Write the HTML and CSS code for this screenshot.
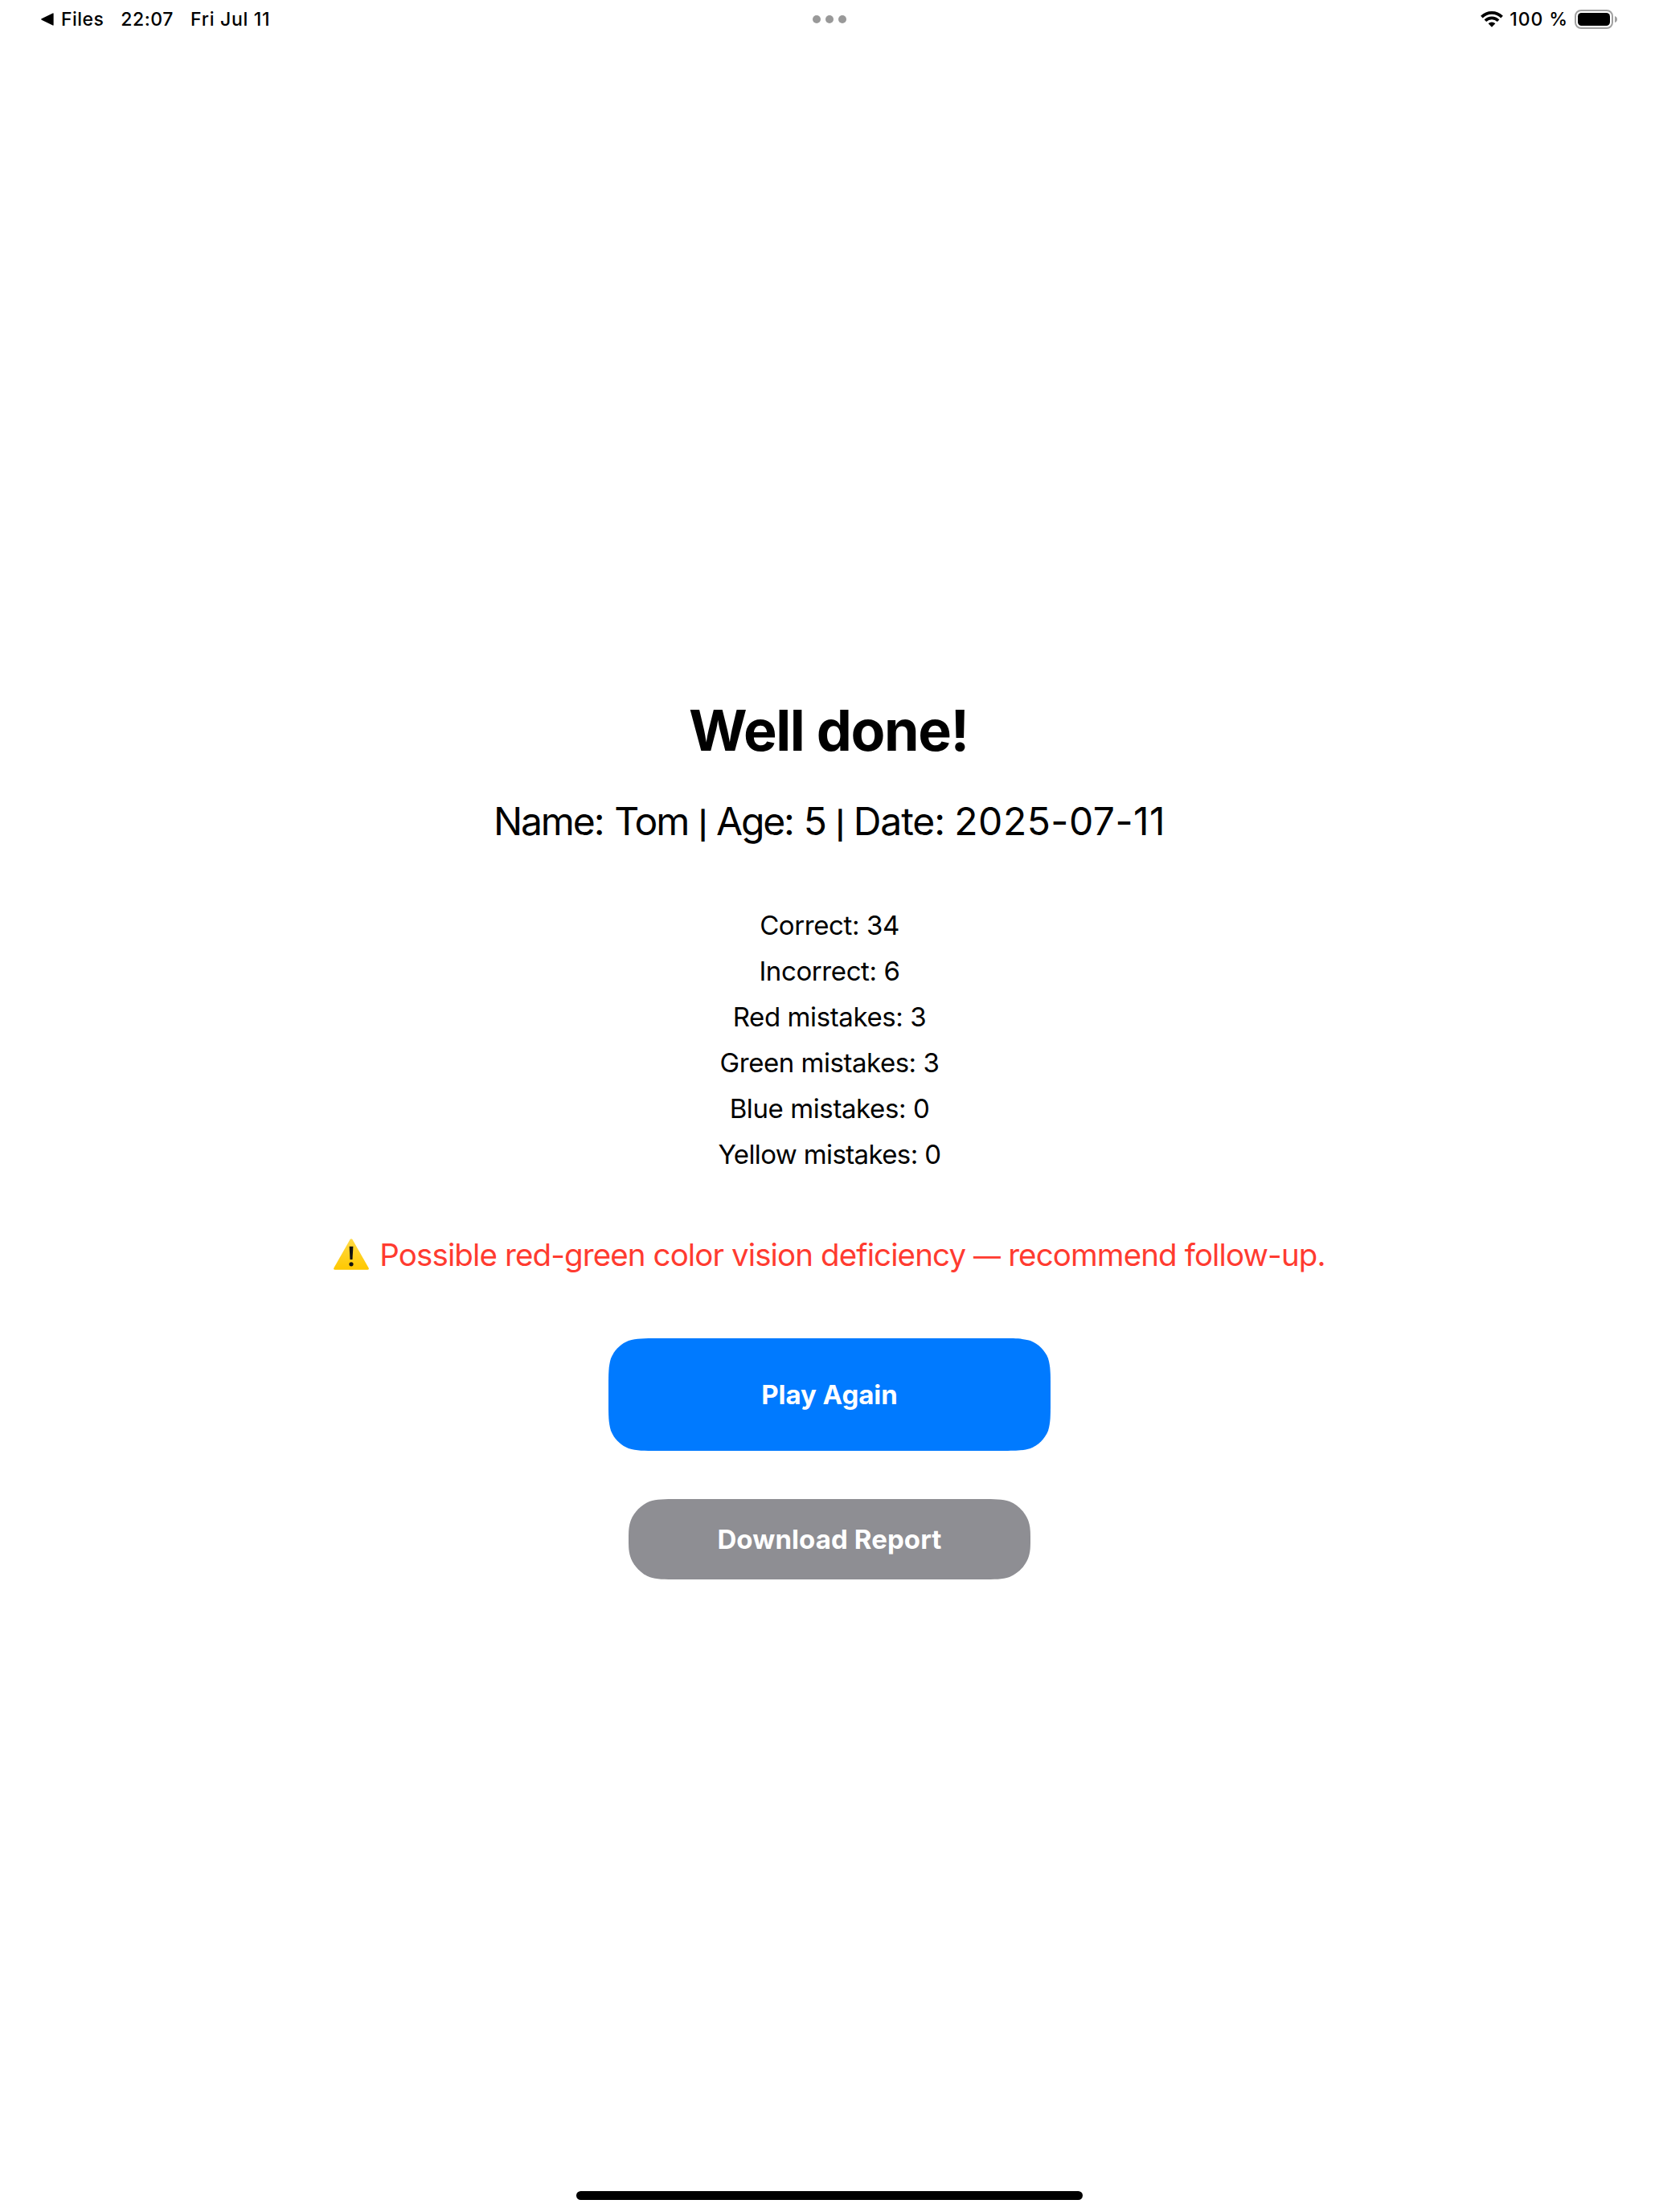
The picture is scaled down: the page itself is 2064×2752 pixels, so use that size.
FILE: index.html
```html
<!DOCTYPE html>
<html lang="en">
<head>
<meta charset="utf-8">
<title>Well done!</title>
<link rel="stylesheet" href="styles.css">
</head>
<body>
<header class="status-bar">
  <div class="status-left">
    <svg class="back-arrow" width="16" height="16" viewBox="0 0 16 16"><path d="M.7 7.3 14.6.4Q15.6 0 15.6 1v14q0 1-1 .6L.7 8.7Q-.3 8 .7 7.3Z"/></svg>
    <span class="back-app">Files</span>
    <span class="clock">22:07</span>
    <span class="date">Fri Jul 11</span>
  </div>
  <div class="multitask"><i></i><i></i><i></i></div>
  <div class="status-right">
    <svg class="wifi" width="28" height="20" viewBox="0 0 28 20"><g fill="none" stroke="#000" stroke-width="3.7"><path d="M1.4 7.1A17.8 17.8 0 0 1 26.6 7.1"/><path d="M5.9 11.7A11.5 11.5 0 0 1 22.1 11.7"/></g><path d="M9.6 15.3a6.2 6.2 0 0 1 8.8 0L14 19.8Z"/></svg>
    <span class="percent">100 %</span>
    <svg class="battery" width="54" height="24" viewBox="0 0 54 24"><rect x="1" y="1" width="46" height="22" rx="7" fill="none" stroke="#a0a0a0" stroke-width="2"/><rect x="4" y="4" width="40" height="16" rx="4.5"/><path d="M50 8q3 1 3 4t-3 4Z" fill="#a0a0a0"/></svg>
  </div>
</header>
<main class="results">
  <h1 class="title">Well done!</h1>
  <p class="player"><span class="name">Name: Tom</span> <span class="bar">|</span> <span class="age">Age: 5</span> <span class="bar">|</span> Date: <span class="day">2025-07-11</span></p>
  <ul class="scores">
    <li>Correct: 34</li>
    <li>Incorrect: 6</li>
    <li>Red mistakes: 3</li>
    <li class="tight">Green mistakes: 3</li>
    <li>Blue mistakes: 0</li>
    <li class="tighter">Yellow mistakes: 0</li>
  </ul>
  <div class="warning">
    <svg class="sign" width="44" height="39" viewBox="0 0 44 39"><defs><linearGradient id="sign" x1="0" y1="0" x2="0" y2="1"><stop offset="0" stop-color="#ffda45"/><stop offset="1" stop-color="#ffc800"/></linearGradient></defs><path d="M20.4 1.3Q22-.7 23.6 1.3L43.5 36.2Q44.6 38.7 42 38.7H2Q-.6 38.7.5 36.2Z" fill="url(#sign)"/><path d="M19.6 9.8h4.8L23.5 26h-3Z" fill="#111"/><circle cx="22" cy="31.8" r="2.6" fill="#111"/></svg>
    <p>Possible red-green color vision deficiency <span class="dash">—</span> recommend follow-up.</p>
  </div>
  <button class="button play">Play Again</button>
  <button class="button download">Download Report</button>
</main>
<footer class="home"><div class="home-indicator"></div></footer>
</body>
</html>
```
FILE: styles.css
```css
* {
  box-sizing: border-box;
  margin: 0;
  padding: 0;
}

body {
  display: flex;
  flex-direction: column;
  height: 2752px;
  background: #fff;
  color: #000;
  font-family: Inter, "Liberation Sans", sans-serif;
}

svg {
  display: block;
  flex: none;
}

.status-bar {
  display: grid;
  grid-template-columns: 1fr auto 1fr;
  align-items: center;
  height: 48px;
  padding: 0 51px;
  font-size: 23px;
  font-weight: 500;
  line-height: 48px;
  white-space: pre;
}

.status-left,
.status-right {
  display: flex;
  align-items: center;
}

.status-right {
  justify-content: flex-end;
}

.back-app {
  margin-left: 9px;
  letter-spacing: 0.46px;
}

.clock {
  margin-left: 21px;
  letter-spacing: 0.57px;
}

.date {
  margin-left: 21px;
  letter-spacing: 0.71px;
}

.multitask {
  display: flex;
  gap: 6px;
}

.multitask i {
  width: 10px;
  height: 10px;
  border-radius: 50%;
  background: #999;
}

.percent {
  margin-left: 8px;
  letter-spacing: 0.9px;
}

.battery {
  margin-left: 8px;
}

.results {
  display: flex;
  flex: 1;
  flex-direction: column;
  align-items: center;
  padding-top: 819px;
}

.title {
  padding-right: 2px;
  font-size: 70px;
  font-weight: 700;
  line-height: 84px;
  letter-spacing: -1.355px;
}

.player {
  margin-top: 42px;
  font-size: 48px;
  line-height: 58px;
  letter-spacing: -1.1px;
}

.name {
  letter-spacing: -2.1px;
  word-spacing: 2.5px;
}

.age {
  letter-spacing: -2.2px;
  word-spacing: 2px;
}

.day {
  letter-spacing: 0.5px;
}

.bar {
  margin-right: -1px;
  font-size: 34px;
  font-weight: 600;
  line-height: 1;
}

.scores {
  margin-top: 72px;
  list-style: none;
  text-align: center;
  font-size: 33px;
  line-height: 57px;
  letter-spacing: -0.4px;
}

.tight {
  letter-spacing: -0.47px;
}

.tighter {
  letter-spacing: -0.62px;
}

.warning {
  display: flex;
  gap: 13px;
  align-items: center;
  margin-top: 72px;
  color: #ff3b30;
  font-size: 38.5px;
  line-height: 48px;
  letter-spacing: -0.89px;
}

.sign {
  margin-bottom: 2px;
}

.dash {
  font-size: 34px;
  line-height: 1;
}

.button {
  border: 0;
  color: #fff;
  font: 700 33px/40px Inter, "Liberation Sans", sans-serif;
}

/* Continuous-curvature corners, 40px radius. */
.play {
  width: 550px;
  height: 140px;
  margin-top: 80px;
  background: #007aff;
  letter-spacing: -0.05px;
  clip-path: path("M61 0H489C506 0 515 0 525 3C535 7 543 15 547 25C550 35 550 44 550 61V79C550 96 550 105 547 115C543 125 535 133 525 137C515 140 506 140 489 140H61C44 140 35 140 25 137C15 133 7 125 3 115C0 105 0 96 0 79V61C0 44 0 35 3 25C7 15 15 7 25 3C35 0 44 0 61 0Z");
}

.download {
  width: 500px;
  height: 100px;
  margin-top: 60px;
  background: #8e8e93;
  letter-spacing: 0.1px;
  clip-path: path("M61 0H439C456 0 465 0 474 3C484 7 493 16 497 26C500 34 500 41 500 50C500 59 500 66 497 74C493 84 484 93 474 97C465 100 456 100 439 100H61C44 100 35 100 26 97C16 93 7 84 3 74C0 66 0 59 0 50C0 41 0 34 3 26C7 16 16 7 26 3C35 0 44 0 61 0Z");
}

.home {
  display: flex;
  justify-content: center;
  height: 26px;
}

.home-indicator {
  width: 630px;
  height: 11px;
  border-radius: 6px;
  background: #000;
}
```
